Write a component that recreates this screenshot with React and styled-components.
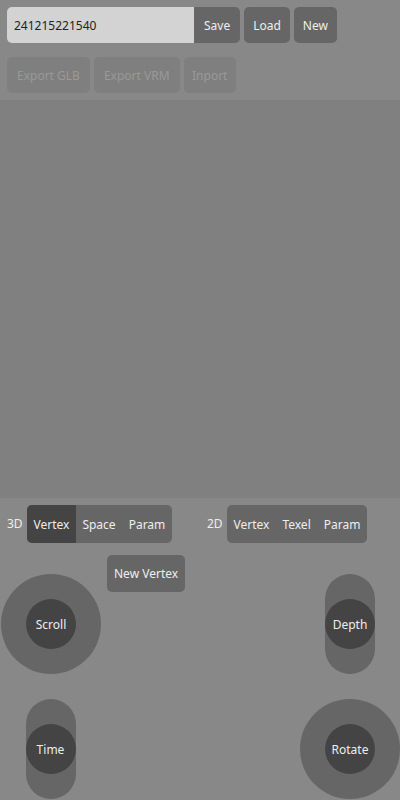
import React from "react";
import styled, { createGlobalStyle } from "styled-components";

const Global = createGlobalStyle`
  html, body { margin: 0; padding: 0; background: #888888; }
  body { font-family: "Noto Sans", "Noto Sans CJK JP", sans-serif; }
  * { box-sizing: border-box; }
`;

const Page = styled.div`
  width: 400px;
  height: 800px;
  display: flex;
  flex-direction: column;
  background: #888888;
  overflow: hidden;
`;

const Toolbar = styled.div`
  display: flex;
  flex-direction: column;
  gap: 14px;
  padding: 7px;
`;

const Row = styled.div`
  display: flex;
  gap: 4px;
  height: 36px;
`;

const InputGroup = styled.div`
  display: flex;
`;

const NameInput = styled.input`
  width: 187px;
  height: 36px;
  border: none;
  outline: none;
  border-radius: 5px 0 0 5px;
  background: #d3d3d3;
  color: #222;
  font-family: inherit;
  font-size: 12px;
  padding: 0 7px;
`;

const Button = styled.button`
  height: ${(p) => p.$h || 36}px;
  padding: 0 ${(p) => p.$px || 10}px;
  border: none;
  border-radius: ${(p) => (p.$attached ? "0 5px 5px 0" : "5px")};
  background: ${(p) => (p.$disabled ? "#7f7f7f" : "#666666")};
  color: ${(p) => (p.$disabled ? "#999999" : "#eeeeee")};
  font-family: inherit;
  font-size: 12px;
  cursor: pointer;
`;

const Canvas = styled.div`
  height: 398px;
  background: #808080;
`;

const Controls = styled.div`
  flex: 1;
  display: flex;
  flex-direction: column;
  gap: 12px;
  padding-top: 7px;
`;

const Header = styled.div`
  display: grid;
  grid-template-columns: 200px 200px;
  padding-left: 7px;
`;

const ModeGroup = styled.div`
  display: flex;
  align-items: center;
`;

const ModeLabel = styled.span`
  width: 20px;
  color: #eeeeee;
  font-size: 12px;
  margin-top: -2px;
`;

const Tabs = styled.div`
  display: flex;
  height: 38px;
  border-radius: 5px;
  background: #666666;
  overflow: hidden;
`;

const Tab = styled.div`
  display: flex;
  align-items: center;
  padding: 0 6.5px;
  background: ${(p) => (p.$active ? "#444444" : "transparent")};
  color: #eeeeee;
  font-size: 12px;
`;

const StickGrid = styled.div`
  display: grid;
  grid-template-columns: 101px 1fr 100px;
  grid-template-rows: 119px 100px;
  row-gap: 25px;
`;

const Cell = styled.div`
  display: flex;
  justify-content: ${(p) => p.$justify || "center"};
  align-items: ${(p) => p.$align || "flex-end"};
`;

const MiddleCell = styled.div`
  padding-left: 6px;
`;

const Base = styled.div`
  width: ${(p) => (p.$shape === "pill" ? 50 : 100)}px;
  height: 100px;
  border-radius: 50px;
  background: #666666;
  display: flex;
  align-items: center;
  justify-content: center;
`;

const Knob = styled.div`
  width: 50px;
  height: 50px;
  border-radius: 50%;
  background: #444444;
  color: #eeeeee;
  font-size: 12px;
  display: flex;
  align-items: center;
  justify-content: center;
`;

function Stick({ label, shape }) {
  return (
    <Base $shape={shape}>
      <Knob>{label}</Knob>
    </Base>
  );
}

export default function App() {
  return (
    <>
      <Global />
      <Page>
        <Toolbar>
          <Row>
            <InputGroup>
              <NameInput defaultValue="241215221540" />
              <Button $attached>Save</Button>
            </InputGroup>
            <Button $px={9}>Load</Button>
            <Button $px={9}>New</Button>
          </Row>
          <Row>
            <Button $disabled>Export GLB</Button>
            <Button $disabled>Export VRM</Button>
            <Button $disabled $px={8.5}>Inport</Button>
          </Row>
        </Toolbar>
        <Canvas />
        <Controls>
          <Header>
            <ModeGroup>
              <ModeLabel>3D</ModeLabel>
              <Tabs>
                <Tab $active>Vertex</Tab>
                <Tab>Space</Tab>
                <Tab>Param</Tab>
              </Tabs>
            </ModeGroup>
            <ModeGroup>
              <ModeLabel>2D</ModeLabel>
              <Tabs>
                <Tab>Vertex</Tab>
                <Tab>Texel</Tab>
                <Tab>Param</Tab>
              </Tabs>
            </ModeGroup>
          </Header>
          <StickGrid>
            <Cell $justify="flex-end">
              <Stick label="Scroll" />
            </Cell>
            <MiddleCell>
              <Button $h={37} $px={7}>New Vertex</Button>
            </MiddleCell>
            <Cell>
              <Stick label="Depth" shape="pill" />
            </Cell>
            <Cell>
              <Stick label="Time" shape="pill" />
            </Cell>
            <div />
            <Cell>
              <Stick label="Rotate" />
            </Cell>
          </StickGrid>
        </Controls>
      </Page>
    </>
  );
}
